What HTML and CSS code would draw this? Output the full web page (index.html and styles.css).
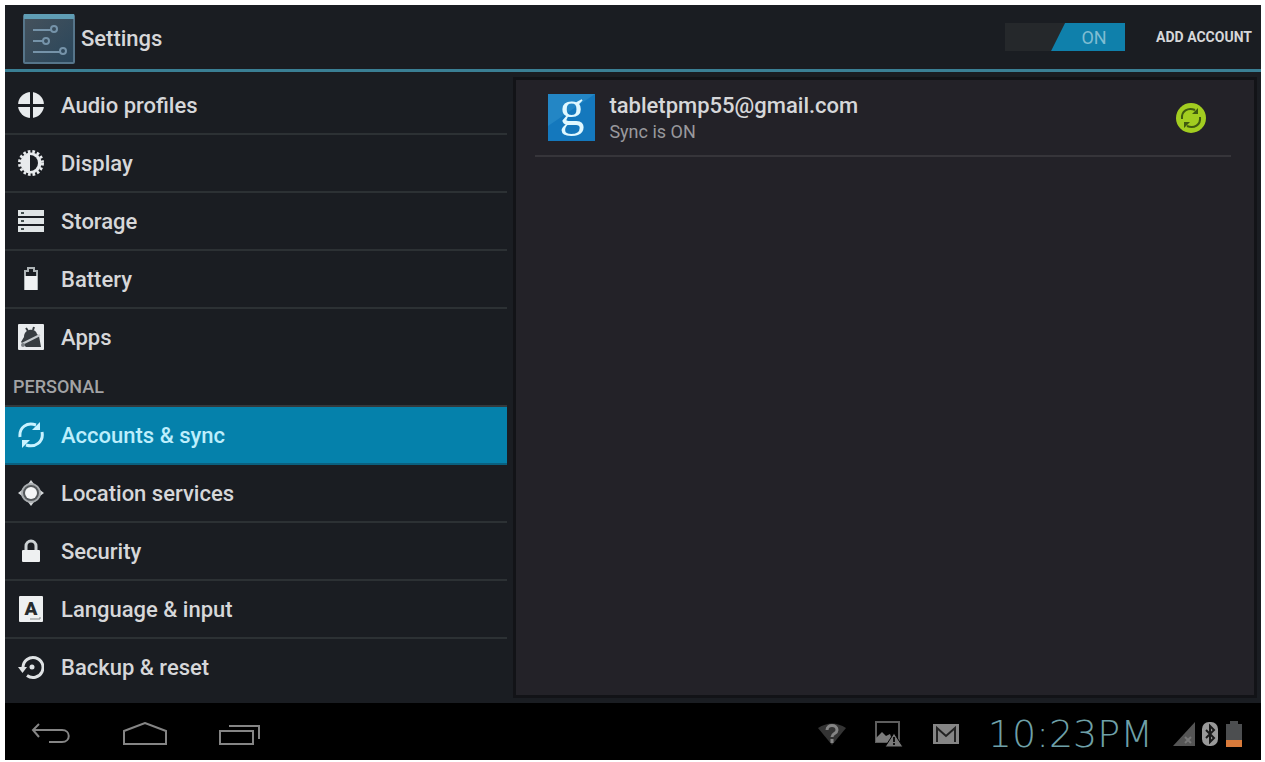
FILE: index.html
```html
<!DOCTYPE html>
<html lang="en">

<head>
    <meta charset="UTF-8">
    <meta name="viewport" content="width=device-width, initial-scale=1.0">
    <title>Settings</title>
    <link rel="stylesheet" href="styles.css">
</head>

<body>
    <div class="screen">
        <header class="action-bar">
            <svg class="app-icon" width="52" height="50" viewBox="0 0 52 50">
                <defs>
                    <linearGradient id="appFill" x1="0" y1="0" x2="1" y2="1">
                        <stop offset="0" stop-color="#46525c" />
                        <stop offset="1" stop-color="#29465b" />
                    </linearGradient>
                </defs>
                <rect x="1" y="1" width="50" height="48" rx="1" fill="url(#appFill)" stroke="#56758a" stroke-width="2" />
                <path d="M1 0h50v5H1z" fill="#5f9db4" />
                <g fill="none" stroke="#7593a9" stroke-width="2">
                    <path d="M10 16h18M10 27h10M10 38h27" />
                    <circle cx="31" cy="15" r="3" />
                    <circle cx="23" cy="27" r="3" />
                    <circle cx="40" cy="37" r="3" />
                </g>
            </svg>
            <h1>Settings</h1>
            <label class="switch">
                <input type="checkbox" checked aria-label="Sync">
                <span class="switch-thumb">ON</span>
            </label>
            <button type="button" class="add-account">ADD ACCOUNT</button>
        </header>

        <main class="content">
            <nav class="sidebar">
                <a href="#audio" class="item">
                    <svg class="icon" viewBox="0 0 26 26">
                        <circle cx="13" cy="13" r="13" fill="#e8ebed" />
                        <path d="M13.500 0v26M0 13.500h26" stroke="#1a1d22" stroke-width="3" />
                    </svg>
                    Audio profiles
                </a>
                <a href="#display" class="item">
                    <svg class="icon" viewBox="0 0 26 26">
                        <circle cx="13" cy="13" r="11.500" fill="none" stroke="#e8ebed" stroke-width="3" stroke-dasharray="2.600 2" />
                        <circle cx="13" cy="13" r="10.500" fill="#e8ebed" />
                        <path d="M12 5a8 8 0 0 1 0 16z" fill="#1a1d22" />
                    </svg>
                    Display
                </a>
                <a href="#storage" class="item">
                    <svg class="icon" viewBox="0 0 26 26">
                        <path d="M0 2h26v6H0zM0 10h26v6H0zM0 18h26v6H0z" fill="#dfe4e5" />
                        <path d="M3 4h3v2H3zM3 12h3v2H3zM3 20h3v2H3z" fill="#44504f" />
                    </svg>
                    Storage
                </a>
                <a href="#battery" class="item">
                    <svg class="icon" viewBox="0 0 26 26">
                        <path d="M7 23V5h3V2h6v3h3v18z" fill="none" stroke="#aeb4b6" stroke-width="2" />
                        <path d="M7 10h12v14H7z" fill="#f0f2f3" />
                    </svg>
                    Battery
                </a>
                <a href="#apps" class="item">
                    <svg class="icon" viewBox="0 0 26 26">
                        <rect width="26" height="26" rx="1" fill="#e8ebed" />
                        <path d="M6 13c0-9 12-9 13-3l2 2 2 11H8L3 18z" fill="#363c40" />
                        <path d="M10 7L8 4M15 6l1-3" stroke="#363c40" stroke-width="2" />
                        <path d="M4 20l18-9" stroke="#c5cacd" stroke-width="2" />
                        <circle cx="5" cy="21" r="2" fill="#7b8185" />
                    </svg>
                    Apps
                </a>
                <h2>PERSONAL</h2>
                <a href="#accounts" class="item selected" aria-current="page">
                    <svg class="icon" viewBox="0 0 26 26">
                        <g fill="none" stroke="#c9f2ff" stroke-width="3">
                            <path d="M2 15C1 5 9 0 18 3" />
                            <path d="M24 10c2 10-7 16-16 13" />
                        </g>
                        <path d="M22 0v8h-8zM4 26v-8h8z" fill="#c9f2ff" />
                    </svg>
                    Accounts &amp; sync
                </a>
                <a href="#location" class="item">
                    <svg class="icon" viewBox="0 0 26 26">
                        <path d="M13 0l3 4h-6zM13 26l3-4h-6zM0 13l4-3v6zM26 13l-4-3v6z" fill="#d5d8da" />
                        <circle cx="13" cy="13" r="9" fill="#55595c" stroke="#a9adb0" stroke-width="2" />
                        <circle cx="13" cy="13" r="6" fill="#f5f6f7" />
                    </svg>
                    Location services
                </a>
                <a href="#security" class="item">
                    <svg class="icon" viewBox="0 0 26 26">
                        <path d="M8 13V8a5 5 0 0 1 10 0v5" fill="none" stroke="#cdd2d4" stroke-width="3" />
                        <rect x="4" y="12" width="18" height="12" rx="1" fill="#eef0f1" />
                    </svg>
                    Security
                </a>
                <a href="#language" class="item">
                    <svg class="icon" viewBox="0 0 26 26">
                        <rect x="1" width="24" height="26" rx="1" fill="#eef0f1" />
                        <text x="13" y="19" text-anchor="middle" class="icon-letter">A</text>
                        <path d="M12 23h10v-2" fill="none" stroke="#81878a" />
                    </svg>
                    Language &amp; input
                </a>
                <a href="#backup" class="item">
                    <svg class="icon" viewBox="0 0 26 26">
                        <path d="M5 13A10 10 0 1 1 9 21.500" fill="none" stroke="#dfe2e4" stroke-width="3" />
                        <path d="M0 13h9l-4.500 6z" fill="#dfe2e4" />
                        <circle cx="14" cy="13" r="2.500" fill="#dfe2e4" />
                    </svg>
                    Backup &amp; reset
                </a>
            </nav>

            <section class="panel">
                <a href="#google" class="account">
                    <svg class="google-logo" width="47" height="47" viewBox="0 0 47 47">
                        <rect width="47" height="47" fill="#1478bd" />
                        <path d="M0 0h47L0 32z" fill="#2386c5" />
                        <text x="24" y="31" text-anchor="middle" class="google-letter">g</text>
                    </svg>
                    <span class="account-text">
                        <span class="account-name">tabletpmp55@gmail.com</span>
                        <span class="account-status">Sync is ON</span>
                    </span>
                    <svg width="32" height="32" viewBox="0 0 32 32">
                        <circle cx="16" cy="16" r="15" fill="#a2cd20" />
                        <g fill="none" stroke="#3f5b10" stroke-width="2">
                            <path d="M7 17C6 9 13 5 20 8" />
                            <path d="M25 15c1 8-6 12-13 9" />
                        </g>
                        <path d="M23 6v6h-6zM9 26v-6h6z" fill="#3f5b10" />
                    </svg>
                </a>
            </section>
        </main>

        <footer class="system-bar">
            <button type="button" aria-label="Back">
                <svg width="40" height="24" viewBox="0 0 40 24">
                    <path d="M8 2L2 8l6 7M2 8h29c9 0 9 12 0 12H18" fill="none" stroke="#858585" stroke-width="2" />
                </svg>
            </button>
            <button type="button" aria-label="Home">
                <svg width="44" height="24" viewBox="0 0 44 24">
                    <path d="M1 9l21-8 21 8v13H1z" fill="none" stroke="#858585" stroke-width="2" />
                </svg>
            </button>
            <button type="button" aria-label="Recent apps">
                <svg width="42" height="24" viewBox="0 0 42 24">
                    <path d="M1 9h33v13H1zM10 4h30v13" fill="none" stroke="#858585" stroke-width="2" />
                </svg>
            </button>

            <div class="notifications">
                <svg width="28" height="22" viewBox="0 0 28 22">
                    <path d="M0 5q14-9 28 0L14 22z" fill="#343434" />
                    <path d="M9 7c0-6 10-6 10 0 0 4-5 3-5 7M14 16v4" fill="none" stroke="#858585" stroke-width="3" />
                </svg>
                <svg width="30" height="28" viewBox="0 0 30 28">
                    <path d="M2 2h23v20H2z" fill="none" stroke="#5e5e5e" stroke-width="2" />
                    <path d="M2 18l6-6 4 4 4-2 3 8H2z" fill="#7b7b7b" />
                    <path d="M20 13l9 14H11z" fill="#777" stroke="#000" />
                    <path d="M20 17v5M20 23v2" stroke="#111" stroke-width="2" />
                </svg>
                <svg width="28" height="22" viewBox="0 0 28 22">
                    <rect x="1" y="1" width="26" height="20" fill="#858585" />
                    <path d="M5 19V5l9 8 9-8v14" fill="none" stroke="#222" stroke-width="2" />
                </svg>
            </div>
            <time class="clock">10:23PM</time>
            <div class="status">
                <svg width="22" height="24" viewBox="0 0 22 24">
                    <path d="M22 0v24H0z" fill="#555" />
                    <path d="M12 15l6 6M18 15l-6 6" stroke="#777" stroke-width="2" />
                </svg>
                <svg width="16" height="24" viewBox="0 0 16 24">
                    <rect width="16" height="24" rx="7" fill="#999" />
                    <path d="M4 8l8 8-4 4V4l4 4-8 8" fill="none" stroke="#191919" stroke-width="2" />
                </svg>
                <svg width="18" height="26" viewBox="0 0 18 26">
                    <path d="M1 3h4V0h8v3h4v17H1z" fill="#4c4e50" />
                    <path d="M1 19h16v7H1z" fill="#d97b3b" />
                </svg>
            </div>
        </footer>
    </div>
</body>

</html>
```
FILE: styles.css
```css
* {
    box-sizing: border-box;
}

body {
    margin: 0;
    padding: 5px 4px 2px 5px;
    background-color: #fff;
    font-family: Roboto, sans-serif;
    color: #d6d7d9;
}

.screen {
    display: flex;
    flex-direction: column;
    min-height: calc(100vh - 7px);
    background-color: #1a1d22;
}

h1,
h2 {
    margin: 0;
}

a {
    color: inherit;
    text-decoration: none;
}

button {
    padding: 0;
    border: none;
    background: none;
    color: inherit;
    font-family: inherit;
    cursor: pointer;
}

svg {
    display: block;
    flex-shrink: 0;
}

/* Top bar */
.action-bar {
    display: flex;
    align-items: center;
    height: 67px;
    padding: 0 9px 0 18px;
    border-bottom: 3px solid #3a7f94;
}

.action-bar h1 {
    flex: 1;
    margin-left: 6px;
    padding-top: 2px;
    font-size: 22px;
    font-weight: 500;
}

.app-icon {
    margin-top: 4px;
}

.switch {
    display: flex;
    justify-content: flex-end;
    width: 120px;
    height: 28px;
    margin-right: 31px;
    background-color: #25282b;
    cursor: pointer;
}

.switch input {
    position: absolute;
    opacity: 0;
}

.switch-thumb {
    width: 74px;
    padding-left: 12px;
    background-color: #0f80ab;
    clip-path: polygon(14px 0, 100% 0, 100% 100%, 0 100%);
    color: #80bdd2;
    font-size: 18px;
    line-height: 30px;
    text-align: center;
}

.add-account {
    font-size: 14px;
    font-weight: 700;
}

/* Settings list */
.content {
    display: flex;
    flex: 1;
}

.sidebar {
    width: 40%;
    padding-top: 5px;
}

.item {
    display: flex;
    align-items: center;
    gap: 17px;
    height: 58px;
    padding-left: 13px;
    border-bottom: 2px solid #2c3134;
    font-size: 22px;
    font-weight: 500;
}

.item:has(+ h2),
.item:last-child {
    border-bottom-color: transparent;
}

.item.selected {
    border-bottom-color: #0a607f;
    background-color: #0581ab;
    color: #bdeefc;
}

.icon {
    width: 26px;
    height: 26px;
}

.icon-letter {
    font-size: 19px;
    font-weight: 900;
    fill: #272b2e;
}

.sidebar h2 {
    height: 40px;
    padding: 0 8px;
    border-bottom: 2px solid #34393c;
    color: #a2a3a5;
    font-size: 18px;
    font-weight: 500;
    line-height: 40px;
}

/* Account details */
.panel {
    flex: 1;
    margin: 5px 4px 5px 6px;
    padding: 0 23px 0 19px;
    border: 3px solid #121317;
    background-color: #232228;
}

.account {
    display: flex;
    align-items: center;
    height: 77px;
    padding: 0 24px 0 13px;
    border-bottom: 2px solid #36353a;
}

.account-text {
    display: flex;
    flex: 1;
    flex-direction: column;
    margin-left: 14px;
}

.account-name {
    font-size: 22px;
    font-weight: 500;
    line-height: 28px;
}

.account-status {
    color: #99999d;
    font-size: 18px;
    line-height: 24px;
}

.google-logo {
    overflow: visible;
}

.google-letter {
    font-family: "Liberation Serif", serif;
    font-size: 50px;
    fill: #e0f8ff;
}

/* Navigation and status */
.system-bar {
    display: flex;
    align-items: center;
    gap: 52px;
    height: 57px;
    padding: 4px 18px 0 26px;
    background-color: #000;
}

.notifications {
    display: flex;
    align-items: center;
    gap: 28px;
    margin-left: auto;
}

.clock {
    margin-left: -24px;
    color: #6fa0a8;
    font-family: "DejaVu Sans", sans-serif;
    font-size: 38px;
    font-weight: 200;
    line-height: 44px;
}

.status {
    display: flex;
    align-items: center;
    gap: 7px;
    margin-left: -32px;
}
```
